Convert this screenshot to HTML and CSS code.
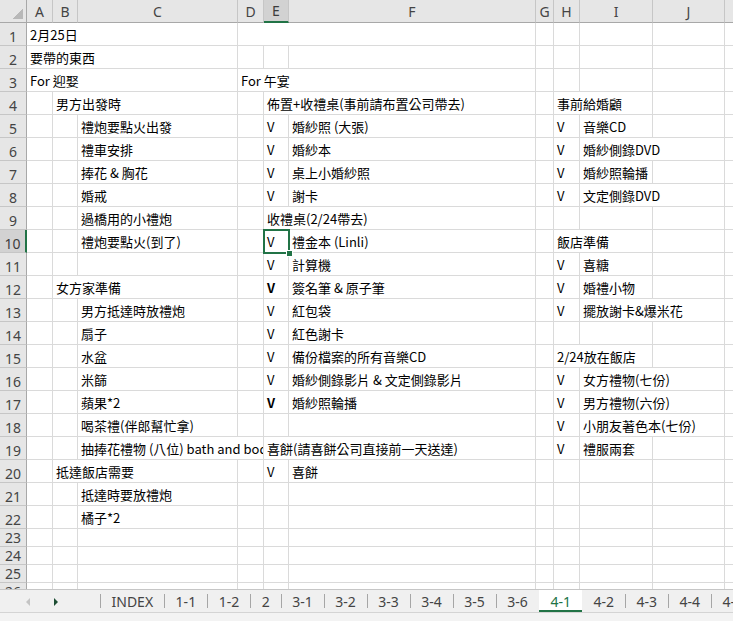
FILE: index.html
```html
<!DOCTYPE html>
<html lang="zh-Hant">
  <head>
    <meta charset="UTF-8">
    <meta name="viewport" content="width=device-width, initial-scale=1">
    <title>4-1</title>
    <link rel="stylesheet" href="styles.css">
  </head>
  <body>

<div class="sheet">
<table class="grid">
  <colgroup>
    <col class="w-rh"><col class="w-a"><col class="w-b"><col class="w-c"><col class="w-d"><col class="w-e">
    <col class="w-f"><col class="w-g"><col class="w-h"><col class="w-i"><col class="w-j"><col class="w-k">
  </colgroup>
  <thead>
    <tr><th class="corner"></th><th>A</th><th>B</th><th>C</th><th>D</th><th class="on">E</th><th>F</th><th>G</th><th>H</th><th>I</th><th>J</th><th>K</th></tr>
  </thead>
  <tbody>
    <tr><th>1</th><td colspan="3">2月25日</td><td colspan="3"></td><td></td><td></td><td></td><td></td><td></td></tr>
    <tr><th>2</th><td colspan="3">要帶的東西</td><td></td><td></td><td></td><td></td><td></td><td></td><td></td><td></td></tr>
    <tr><th>3</th><td colspan="3">For 迎娶</td><td colspan="3">For 午宴</td><td></td><td></td><td></td><td></td><td></td></tr>
    <tr><th>4</th><td></td><td colspan="2">男方出發時</td><td></td><td colspan="2">佈置+收禮桌(事前請布置公司帶去)</td><td></td><td colspan="2">事前給婚顧</td><td></td><td></td></tr>
    <tr><th>5</th><td></td><td></td><td>禮炮要點火出發</td><td></td><td>V</td><td>婚紗照 (大張)</td><td></td><td>V</td><td>音樂CD</td><td></td><td></td></tr>
    <tr><th>6</th><td></td><td></td><td>禮車安排</td><td></td><td>V</td><td>婚紗本</td><td></td><td>V</td><td colspan="2">婚紗側錄DVD</td><td></td></tr>
    <tr><th>7</th><td></td><td></td><td>捧花 &amp; 胸花</td><td></td><td>V</td><td>桌上小婚紗照</td><td></td><td>V</td><td>婚紗照輪播</td><td></td><td></td></tr>
    <tr><th>8</th><td></td><td></td><td>婚戒</td><td></td><td>V</td><td>謝卡</td><td></td><td>V</td><td colspan="2">文定側錄DVD</td><td></td></tr>
    <tr><th>9</th><td></td><td></td><td>過橋用的小禮炮</td><td></td><td colspan="2">收禮桌(2/24帶去)</td><td></td><td></td><td></td><td></td><td></td></tr>
    <tr><th class="on">10</th><td></td><td></td><td>禮炮要點火(到了)</td><td></td><td class="sel">V</td><td>禮金本 (Linli)</td><td></td><td colspan="2">飯店準備</td><td></td><td></td></tr>
    <tr><th>11</th><td></td><td></td><td></td><td></td><td>V</td><td>計算機</td><td></td><td>V</td><td>喜糖</td><td></td><td></td></tr>
    <tr><th>12</th><td></td><td colspan="2">女方家準備</td><td></td><td class="bold">V</td><td>簽名筆 &amp; 原子筆</td><td></td><td>V</td><td>婚禮小物</td><td></td><td></td></tr>
    <tr><th>13</th><td></td><td></td><td>男方抵達時放禮炮</td><td></td><td>V</td><td>紅包袋</td><td></td><td>V</td><td colspan="2">擺放謝卡&amp;爆米花</td><td></td></tr>
    <tr><th>14</th><td></td><td></td><td>扇子</td><td></td><td>V</td><td>紅色謝卡</td><td></td><td></td><td></td><td></td><td></td></tr>
    <tr><th>15</th><td></td><td></td><td>水盆</td><td></td><td>V</td><td>備份檔案的所有音樂CD</td><td></td><td colspan="2">2/24放在飯店</td><td></td><td></td></tr>
    <tr><th>16</th><td></td><td></td><td>米篩</td><td></td><td>V</td><td>婚紗側錄影片 &amp; 文定側錄影片</td><td></td><td>V</td><td colspan="2">女方禮物(七份)</td><td></td></tr>
    <tr><th>17</th><td></td><td></td><td>蘋果*2</td><td></td><td class="bold">V</td><td>婚紗照輪播</td><td></td><td>V</td><td colspan="2">男方禮物(六份)</td><td></td></tr>
    <tr><th>18</th><td></td><td></td><td>喝茶禮(伴郎幫忙拿)</td><td></td><td></td><td></td><td></td><td>V</td><td colspan="2">小朋友著色本(七份)</td><td></td></tr>
    <tr><th>19</th><td></td><td></td><td colspan="2">抽捧花禮物 (八位) bath and body works</td><td colspan="2">喜餅(請喜餅公司直接前一天送達)</td><td></td><td>V</td><td>禮服兩套</td><td></td><td></td></tr>
    <tr><th>20</th><td></td><td colspan="2">抵達飯店需要</td><td></td><td>V</td><td>喜餅</td><td></td><td></td><td></td><td></td><td></td></tr>
    <tr><th>21</th><td></td><td></td><td>抵達時要放禮炮</td><td></td><td></td><td></td><td></td><td></td><td></td><td></td><td></td></tr>
    <tr><th>22</th><td></td><td></td><td>橘子*2</td><td></td><td></td><td></td><td></td><td></td><td></td><td></td><td></td></tr>
    <tr class="short"><th>23</th><td></td><td></td><td></td><td></td><td></td><td></td><td></td><td></td><td></td><td></td><td></td></tr>
    <tr class="short"><th>24</th><td></td><td></td><td></td><td></td><td></td><td></td><td></td><td></td><td></td><td></td><td></td></tr>
    <tr class="short"><th>25</th><td></td><td></td><td></td><td></td><td></td><td></td><td></td><td></td><td></td><td></td><td></td></tr>
    <tr class="short"><th>26</th><td></td><td></td><td></td><td></td><td></td><td></td><td></td><td></td><td></td><td></td><td></td></tr>
  </tbody>
</table>
</div>

<div class="tabbar">
  <div class="nav">
    <svg class="arrow" width="6" height="10" viewBox="0 0 6 10"><path d="M5 1 L1 5 L5 9 Z" fill="#c4c4c4"/></svg>
    <svg class="arrow" width="6" height="10" viewBox="0 0 6 10"><path d="M1 1 L5 5 L1 9 Z" fill="#1d4d33"/></svg>
  </div>
  <div class="tabs">
    <span class="tab">INDEX</span>
    <span class="tab">1-1</span>
    <span class="tab">1-2</span>
    <span class="tab">2</span>
    <span class="tab">3-1</span>
    <span class="tab">3-2</span>
    <span class="tab">3-3</span>
    <span class="tab">3-4</span>
    <span class="tab">3-5</span>
    <span class="tab">3-6</span>
    <span class="tab active">4-1</span>
    <span class="tab">4-2</span>
    <span class="tab">4-3</span>
    <span class="tab">4-4</span>
    <span class="tab">4-5</span>
  </div>
</div>
<div class="status"></div>

  </body>
</html>
```

FILE: styles.css
```css
*, ::before, ::after { box-sizing: border-box; }
html, body { margin: 0; }

body {
  width: 733px;
  height: 621px;
  overflow: hidden;
  display: flex;
  flex-direction: column;
  background: #fff;
  font-family: "Noto Sans CJK TC", sans-serif;
}

.sheet {
  height: 589px;
  overflow: hidden;
  flex: none;
}

/* grid */
.grid {
  border-collapse: separate;
  border-spacing: 0;
  table-layout: fixed;
  width: 785px;
}
.w-rh { width: 27px; }
.w-a { width: 26px; }
.w-b { width: 25px; }
.w-c { width: 160px; }
.w-d { width: 26px; }
.w-e { width: 25px; }
.w-f { width: 247px; }
.w-g { width: 18px; }
.w-h { width: 26px; }
.w-i { width: 73px; }
.w-j { width: 72px; }
.w-k { width: 60px; }

tbody tr { height: 23px; }
tbody tr.short { height: 18px; }

td {
  padding: 1px 0 0 3px;
  border-right: 1px solid #dadada;
  border-bottom: 1px solid #dadada;
  font-size: 13px;
  line-height: 16px;
  color: #000;
  white-space: nowrap;
  overflow: hidden;
  vertical-align: middle;
}
td.bold { font-weight: bold; }

th {
  padding: 0;
  font-family: "Noto Sans", sans-serif;
  font-weight: normal;
  font-size: 14px;
  color: #444;
  background: #e6e6e6;
}
thead th {
  height: 23px;
  line-height: 18px;
  vertical-align: bottom;
  padding-bottom: 1px;
  border-right: 1px solid #c6c6c6;
  border-bottom: 1px solid #a8a8a8;
}
thead th.corner {
  border-right-color: #a8a8a8;
  background: linear-gradient(135deg, transparent 50%, #b8b8b8 50%) no-repeat right 3px bottom 3px / 10px 11px, #e6e6e6;
}
thead th.on {
  background: #d2d2d2;
  color: #3c3c3c;
  border-bottom: 2px solid #217346;
}
tbody th {
  line-height: 17px;
  vertical-align: bottom;
  border-right: 1px solid #a8a8a8;
  border-bottom: 1px solid #c6c6c6;
}
tbody th.on {
  background: #d2d2d2;
  color: #3c3c3c;
  border-right: 2px solid #217346;
}

/* active cell */
td.sel {
  position: relative;
  overflow: visible;
}
td.sel::after {
  content: "";
  position: absolute;
  top: -1px;
  left: -1px;
  right: -2px;
  bottom: -2px;
  border: 2px solid #217346;
}
td.sel::before {
  content: "";
  position: absolute;
  right: -5px;
  bottom: -5px;
  width: 7px;
  height: 7px;
  background: #217346;
  border: 1px solid #fff;
  z-index: 1;
}

/* sheet tabs */
.tabbar {
  height: 23px;
  flex: none;
  display: flex;
  background: #f0f0f0;
  border-top: 1px solid #c6c6c6;
  font-family: "Noto Sans", sans-serif;
}
.nav {
  width: 100px;
  flex: none;
  display: flex;
  align-items: center;
  gap: 22px;
  padding: 2px 0 0 25px;
}
.tabs {
  display: flex;
  white-space: nowrap;
}
.tab {
  padding: 2px 11px 0 11.5px;
  font-size: 14px;
  line-height: 20px;
  color: #444;
  background: linear-gradient(#a6a6a6, #a6a6a6) no-repeat left center / 1px 14px;
}
.tab.active {
  background: #fff;
  color: #217346;
  border-bottom: 2px solid #217346;
}
.tab.active + .tab { background: none; }

.status {
  flex: 1;
  background: #f3f3f3;
  border-top: 1px solid #d4d4d4;
}
```
